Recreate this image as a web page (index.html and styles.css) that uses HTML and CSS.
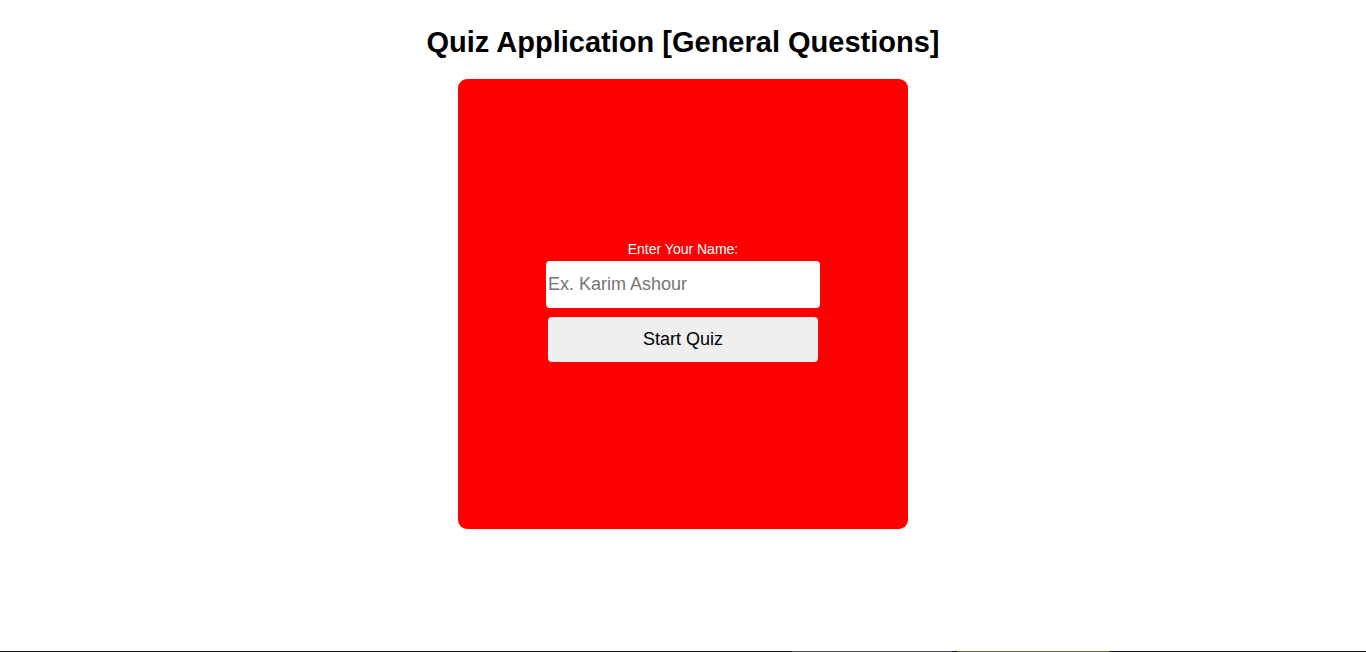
FILE: index.html
```html
<!DOCTYPE html>
<html lang="en">
<head>
<meta charset="utf-8">
<meta name="viewport" content="width=device-width, initial-scale=1">
<title>Quiz Application</title>
<link rel="stylesheet" href="styles.css">
</head>
<body>
<main class="page">
  <h1 class="title">Quiz Application [General Questions]</h1>
  <form class="card">
    <label class="label" for="name">Enter Your Name:</label>
    <input class="name-input" id="name" type="text" placeholder="Ex. Karim Ashour">
    <button class="start-button" type="button">Start Quiz</button>
  </form>
</main>
<footer class="edge">
  <span class="edge-item"></span>
  <span class="edge-item edge-item-active"></span>
</footer>
</body>
</html>
```

FILE: styles.css
```css
* {
  box-sizing: border-box;
}

body {
  margin: 0;
  min-height: 100vh;
  display: flex;
  flex-direction: column;
  background: #fff;
  color: #000;
  font-family: "Liberation Sans", Arial, sans-serif;
}

.page {
  flex: 1;
  display: flex;
  flex-direction: column;
  align-items: center;
  padding-top: 26px;
}

.title {
  margin: 0 0 20px;
  font-size: 29px;
  line-height: 33px;
  text-align: center;
}

.card {
  display: flex;
  flex-direction: column;
  align-items: center;
  justify-content: center;
  width: 450px;
  max-width: 100%;
  aspect-ratio: 1;
  padding-bottom: 6px;
  border-radius: 9px;
  background: #f00;
}

.label {
  margin-bottom: 4px;
  color: #fff;
  font-size: 14px;
  line-height: 16px;
}

.name-input,
.start-button {
  border: 0;
  border-radius: 4px;
  font-family: inherit;
  font-size: 18px;
}

.name-input {
  width: 274px;
  height: 47px;
  margin-bottom: 9px;
  padding: 0 2px;
  background: #fff;
}

.name-input::placeholder {
  color: #757575;
}

.start-button {
  width: 270px;
  height: 45px;
  padding: 0 6px;
  background: #efefef;
  color: #000;
}

.edge {
  display: flex;
  justify-content: flex-end;
  gap: 5px;
  height: 1px;
  padding-right: 257px;
  background: #1a1a1a;
}

.edge-item {
  width: 160px;
  background: #4a484a;
}

.edge-item-active {
  width: 152px;
  background: #6b6b2e;
}
```
